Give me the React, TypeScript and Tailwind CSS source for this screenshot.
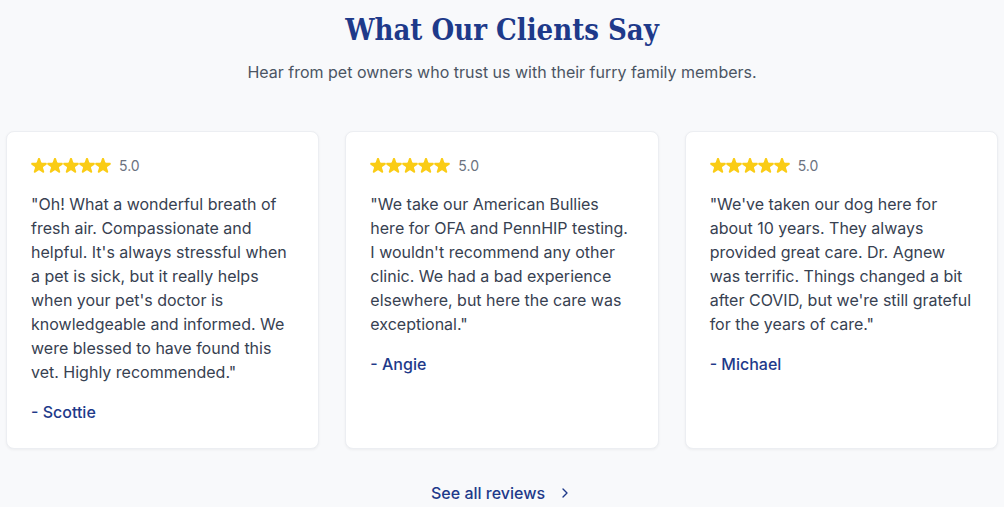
import { ChevronRight } from 'lucide-react';

const reviews = [
  {
    name: 'Scottie',
    text: '"Oh! What a wonderful breath of fresh air. Compassionate and helpful. It\'s always stressful when a pet is sick, but it really helps when your pet\'s doctor is knowledgeable and informed. We were blessed to have found this vet. Highly recommended."',
  },
  {
    name: 'Angie',
    text: '"We take our American Bullies here for OFA and PennHIP testing. I wouldn\'t recommend any other clinic. We had a bad experience elsewhere, but here the care was exceptional."',
  },
  {
    name: 'Michael',
    text: '"We\'ve taken our dog here for about 10 years. They always provided great care. Dr. Agnew was terrific. Things changed a bit after COVID, but we\'re still grateful for the years of care."',
  },
];

function Star() {
  return (
    <svg viewBox="2.4 2.4 15.2 15.2" className="w-4 h-4" fill="#facc15">
      <path d="M9.049 2.927c.3-.921 1.603-.921 1.902 0l1.07 3.292a1 1 0 00.95.69h3.462c.969 0 1.371 1.24.588 1.81l-2.8 2.034a1 1 0 00-.364 1.118l1.07 3.292c.3.921-.755 1.688-1.54 1.118l-2.8-2.034a1 1 0 00-1.175 0l-2.8 2.034c-.784.57-1.838-.197-1.539-1.118l1.07-3.292a1 1 0 00-.364-1.118L2.98 8.72c-.783-.57-.38-1.81.588-1.81h3.461a1 1 0 00.951-.69l1.07-3.292z" />
    </svg>
  );
}

export default function App() {
  return (
    <section
      className="min-h-[507px] bg-[#f8f9fb] pt-[10px] px-[6px] text-center"
      style={{ fontFamily: 'Inter, "Liberation Sans", sans-serif' }}
    >
      <h2
        className="text-[29px] leading-[40px] font-bold text-[#1e3a8a] mb-[10px]"
        style={{ fontFamily: '"DejaVu Serif Condensed", "DejaVu Serif", serif', fontStretch: 'condensed' }}
      >
        What Our Clients Say
      </h2>
      <p className="text-base leading-6 text-[#4b5563] mb-[47px]">
        Hear from pet owners who trust us with their furry family members.
      </p>

      <div className="grid grid-cols-3 gap-[26px] text-left">
        {reviews.map((r) => (
          <div
            key={r.name}
            className="bg-white rounded-lg border border-[#eceef2] shadow-[0_1px_3px_rgba(0,0,0,0.05)] p-6"
          >
            <div className="flex items-center gap-2 h-5 mb-4">
              <div className="flex">
                <Star />
                <Star />
                <Star />
                <Star />
                <Star />
              </div>
              <span className="text-sm text-[#6b7280]">5.0</span>
            </div>
            <p className="text-base leading-6 text-[#374151]">{r.text}</p>
            <p className="mt-4 text-base leading-6 font-medium text-[#1e3a8a]">
              - {r.name}
            </p>
          </div>
        ))}
      </div>

      <a
        href="#"
        className="inline-flex items-center gap-3 mt-8 text-base leading-6 font-medium text-[#1e3a8a]"
      >
        See all reviews
        <ChevronRight className="w-4 h-4" />
      </a>
    </section>
  );
}
